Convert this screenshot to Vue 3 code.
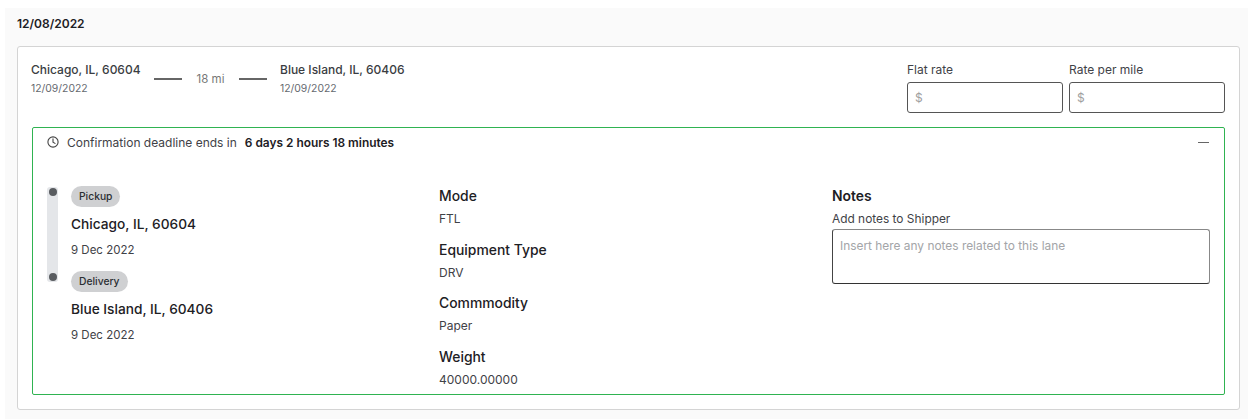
<script setup>
const details = [
  { label: 'Mode', value: 'FTL' },
  { label: 'Equipment Type', value: 'DRV' },
  { label: 'Commmodity', value: 'Paper' },
  { label: 'Weight', value: '40000.00000' },
]
const stops = [
  { tag: 'Pickup', city: 'Chicago, IL, 60604', date: '9 Dec 2022' },
  { tag: 'Delivery', city: 'Blue Island, IL, 60406', date: '9 Dec 2022' },
]
</script>

<template>
  <div class="page">
    <div class="panel">
      <div class="day">12/08/2022</div>
      <div class="card">
        <div class="top">
          <div class="route">
            <div class="place first">
              <div class="city">Chicago, IL, 60604</div>
              <div class="date">12/09/2022</div>
            </div>
            <span class="dash"></span>
            <span class="miles">18 mi</span>
            <span class="dash last"></span>
            <div class="place">
              <div class="city">Blue Island, IL, 60406</div>
              <div class="date">12/09/2022</div>
            </div>
          </div>
          <div class="rates">
            <label class="rate">
              <span class="rate-label">Flat rate</span>
              <span class="rate-input">$</span>
            </label>
            <label class="rate">
              <span class="rate-label">Rate per mile</span>
              <span class="rate-input">$</span>
            </label>
          </div>
        </div>
        <div class="box">
          <div class="box-head">
            <svg class="clock" width="12" height="12" viewBox="0 0 12 12" fill="none" stroke="#444" stroke-width="1.1">
              <circle cx="6" cy="6" r="5.1" />
              <path d="M6 2.9V6.2L8 7.4" stroke-linecap="round" />
            </svg>
            <span class="deadline">Confirmation deadline ends in</span>
            <b class="remain">6 days 2 hours 18 minutes</b>
            <span class="minus"></span>
          </div>
          <div class="body">
            <div class="stops">
              <div class="rail">
                <span class="dot"></span>
                <span class="dot"></span>
              </div>
              <div class="stop-list">
                <div v-for="s in stops" :key="s.tag" class="stop">
                  <span class="tag">{{ s.tag }}</span>
                  <div class="stop-city">{{ s.city }}</div>
                  <div class="stop-date">{{ s.date }}</div>
                </div>
              </div>
            </div>
            <div class="details">
              <div v-for="d in details" :key="d.label" class="detail">
                <div class="detail-label">{{ d.label }}</div>
                <div class="detail-value">{{ d.value }}</div>
              </div>
            </div>
            <div class="notes">
              <div class="detail-label">Notes</div>
              <div class="notes-sub">Add notes to Shipper</div>
              <div class="textarea">Insert here any notes related to this lane</div>
            </div>
          </div>
        </div>
      </div>
    </div>
  </div>
</template>

<style>
html, body { background: #fff; }
</style>

<style scoped>
.page {
  width: 1248px;
  height: 419px;
  overflow: hidden;
  padding: 8px 0 0 5px;
  box-sizing: border-box;
  font-family: Inter, "Noto Sans", sans-serif;
  color: #1d2024;
}
.panel {
  width: 1243px;
  height: 411px;
  padding: 0 8px 0 12px;
  box-sizing: border-box;
  background: #fafafa;
}
.day {
  height: 38px;
  line-height: 32px;
  font-size: 12px;
  font-weight: 600;
}
.card {
  width: 1223px;
  height: 364px;
  padding: 11px 14px 0 13px;
  box-sizing: border-box;
  background: #fff;
  border: 1px solid #d4d4d4;
  border-radius: 3px;
}
.top {
  display: flex;
  justify-content: space-between;
  height: 69px;
}
.route {
  display: flex;
  align-items: flex-start;
  color: #3a3d42;
}
.place { width: 125px; padding-top: 1px; }
.place.first { width: 123px; }
.city {
  font-size: 12px;
  line-height: 22px;
  font-weight: 500;
  white-space: nowrap;
}
.date {
  font-size: 10.4px;
  line-height: 14px;
  margin-top: 1px;
  color: #666a70;
}
.dash {
  width: 28px;
  height: 1.5px;
  margin-top: 20px;
  background: #666;
}
.dash.last { margin-right: 13px; }
.miles {
  width: 57px;
  text-align: center;
  font-size: 11.5px;
  line-height: 16px;
  margin-top: 13px;
  color: #777;
}
.rates {
  display: flex;
  gap: 6px;
}
.rate {
  display: flex;
  flex-direction: column;
  width: 156px;
}
.rate-label {
  font-size: 12px;
  line-height: 24px;
  height: 24px;
  color: #3f4247;
}
.rate-input {
  height: 31px;
  box-sizing: border-box;
  border: 1px solid #555;
  border-radius: 3px;
  padding-left: 7px;
  font-size: 12px;
  line-height: 29px;
  color: #a0a0a0;
}
.box {
  width: 1193px;
  height: 268px;
  margin-left: 1px;
  box-sizing: border-box;
  border: 1px solid #2fb351;
  border-radius: 2px;
}
.box-head {
  display: flex;
  align-items: center;
  height: 29px;
  padding-left: 14px;
  font-size: 12px;
}
.clock { margin-right: 8px; flex: none; margin-top: -1px; }
.deadline { color: #3f4247; margin-right: 8px; }
.remain { font-size: 11.9px; font-weight: 600; color: #1d2024; }
.minus {
  width: 11px;
  height: 1.5px;
  background: #666;
  margin-left: auto;
  margin-right: 15px;
}
.body {
  display: flex;
  padding: 28px 0 0 14px;
}
.stops {
  display: flex;
  width: 392px;
}
.rail {
  width: 11px;
  height: 95px;
  padding: 1px 0;
  box-sizing: border-box;
  margin-top: 2px;
  margin-right: 13px;
  background: #e4e6e9;
  border-radius: 3px;
  display: flex;
  flex-direction: column;
  justify-content: space-between;
  align-items: center;
}
.dot {
  width: 8px;
  height: 8px;
  border-radius: 50%;
  background: #595c60;
}
.stop-list { margin-top: -1px; }
.stop { height: 85px; }
.tag {
  display: inline-block;
  height: 21px;
  line-height: 21px;
  padding: 0 8px;
  border-radius: 11px;
  background: #cfd0d2;
  font-size: 10.3px;
  font-weight: 500;
  color: #2b2e33;
}
.stop-city {
  font-size: 13.7px;
  line-height: 20px;
  font-weight: 500;
  margin-top: 7px;
}
.stop-date {
  font-size: 11.5px;
  line-height: 16px;
  margin-top: 8px;
  color: #3f4247;
}
.details { width: 393px; padding-top: 1px; }
.detail { height: 53.7px; }
.detail-label {
  font-size: 13.9px;
  line-height: 20px;
  font-weight: 500;
  color: #1d2024;
}
.detail-value {
  font-size: 12px;
  line-height: 16px;
  margin-top: 5px;
  color: #3f4247;
}
.notes { width: 378px; padding-top: 1px; }
.notes .detail-label { font-weight: 600; }
.notes-sub {
  font-size: 11.9px;
  line-height: 16px;
  margin-top: 5px;
  color: #3f4247;
}
.textarea {
  height: 55px;
  box-sizing: border-box;
  margin-top: 2px;
  padding: 8px 7px;
  border: 1px solid;
  border-color: #888 #888 #333 #444;
  border-radius: 3px;
  font-size: 11.9px;
  line-height: 16px;
  color: #a3a5a8;
}
</style>
